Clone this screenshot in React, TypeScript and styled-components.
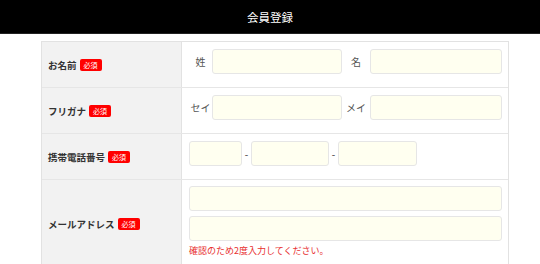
import React from 'react';
import styled, { createGlobalStyle } from 'styled-components';

const GlobalStyle = createGlobalStyle`
  html, body {
    margin: 0;
    padding: 0;
    background: #fff;
    font-family: "Noto Sans CJK JP", "Noto Sans", sans-serif;
    color: #333;
  }
  * { box-sizing: border-box; }
`;

export default function App() {
  return (
    <>
      <GlobalStyle />
      <Styled.Header>会員登録</Styled.Header>
      <Styled.Form>
        <Styled.Row>
          <Styled.Label>
            お名前<Styled.Badge>必須</Styled.Badge>
          </Styled.Label>
          <Styled.Field>
            <Styled.Line>
              <Styled.SubLabel $width={23}>姓</Styled.SubLabel>
              <Styled.Input $width={130} />
              <Styled.SubLabel $width={28}>名</Styled.SubLabel>
              <Styled.Input />
            </Styled.Line>
          </Styled.Field>
        </Styled.Row>
        <Styled.Row>
          <Styled.Label>
            フリガナ<Styled.Badge>必須</Styled.Badge>
          </Styled.Label>
          <Styled.Field>
            <Styled.Line>
              <Styled.SubLabel $width={23}>セイ</Styled.SubLabel>
              <Styled.Input $width={130} />
              <Styled.SubLabel $width={28}>メイ</Styled.SubLabel>
              <Styled.Input />
            </Styled.Line>
          </Styled.Field>
        </Styled.Row>
        <Styled.Row>
          <Styled.Label>
            携帯電話番号<Styled.Badge>必須</Styled.Badge>
          </Styled.Label>
          <Styled.Field>
            <Styled.Line>
              <Styled.Input $width={53} />
              <Styled.Dash>-</Styled.Dash>
              <Styled.Input $width={78} />
              <Styled.Dash>-</Styled.Dash>
              <Styled.Input $width={79} />
            </Styled.Line>
          </Styled.Field>
        </Styled.Row>
        <Styled.Row>
          <Styled.Label>
            メールアドレス<Styled.Badge>必須</Styled.Badge>
          </Styled.Label>
          <Styled.Field $last>
            <Styled.Stack>
              <Styled.Input />
              <Styled.Input />
            </Styled.Stack>
            <Styled.Note>確認のため2度入力してください。</Styled.Note>
          </Styled.Field>
        </Styled.Row>
      </Styled.Form>
    </>
  );
}

const Styled = {
  Header: styled.header`
    height: 34px;
    background: #000;
    border-bottom: 1px solid #222;
    color: #fff;
    font-size: 11.5px;
    display: flex;
    align-items: center;
    justify-content: center;
  `,
  Form: styled.div`
    margin: 7px 31px 0 41px;
    border: 1px solid #e2e2e2;
    border-bottom: none;
  `,
  Row: styled.div`
    display: grid;
    grid-template-columns: 140px 1fr;
    border-bottom: 1px solid #e6e6e6;
  `,
  Label: styled.div`
    background: #f2f2f2;
    border-right: 1px solid #e2e2e2;
    display: flex;
    align-items: center;
    padding-left: 6px;
    font-size: 9.5px;
    font-weight: 700;
    color: #333;
  `,
  Badge: styled.span`
    display: inline-flex;
    align-items: center;
    justify-content: center;
    width: 22px;
    height: 12px;
    margin-left: 3px;
    border-radius: 2px;
    background: #ff0000;
    color: #fff;
    font-size: 7px;
    font-weight: 400;
  `,
  Field: styled.div<{ $last?: boolean }>`
    padding: ${({ $last }) => ($last ? '6px 6px 10px 7px' : '7px 6px 13px 7px')};
  `,
  Line: styled.div`
    display: flex;
    align-items: center;
  `,
  Stack: styled.div`
    display: flex;
    flex-direction: column;
    gap: 5px;
  `,
  SubLabel: styled.span<{ $width: number }>`
    width: ${({ $width }) => $width}px;
    flex: none;
    text-align: center;
    font-size: 10px;
    color: #555;
  `,
  Input: styled.div<{ $width?: number }>`
    height: 25px;
    ${({ $width }) => ($width ? `width: ${$width}px; flex: none;` : 'flex: 1 1 auto; min-width: 0;')}
    background: #fffff0;
    border: 1px solid #e6e6e6;
    border-radius: 3px;
  `,
  Dash: styled.span`
    width: 9px;
    flex: none;
    text-align: center;
    font-size: 10px;
    color: #333;
  `,
  Note: styled.p`
    margin: 3px 0 0;
    font-size: 9px;
    color: #e83030;
  `,
};
